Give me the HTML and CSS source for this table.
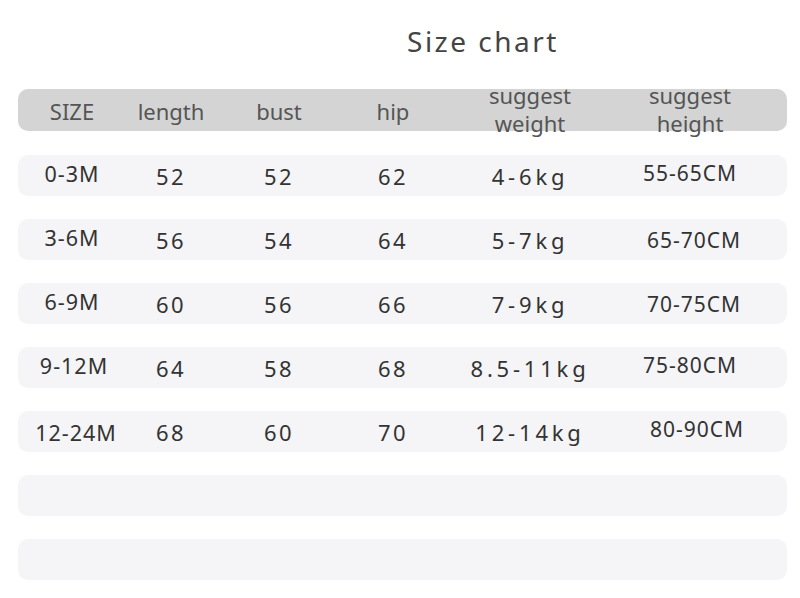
FILE: index.html
```html
<!DOCTYPE html>
<html>
<head>
<meta charset="utf-8">
<link rel="stylesheet" href="styles.css">
</head>
<body>
<div class="page">
  <h1 class="title">Size chart</h1>
  <div class="table">
    <div class="row head">
      <div class="cell">SIZE</div>
      <div class="cell">length</div>
      <div class="cell">bust</div>
      <div class="cell">hip</div>
      <div class="cell two">suggest<br>weight</div>
      <div class="cell two">suggest<br>height</div>
    </div>
    <div class="row">
      <div class="cell size">0-3M</div>
      <div class="cell num">52</div>
      <div class="cell num">52</div>
      <div class="cell num">62</div>
      <div class="cell num kg">4-6kg</div>
      <div class="cell cm">55-65CM</div>
    </div>
    <div class="row">
      <div class="cell size">3-6M</div>
      <div class="cell num">56</div>
      <div class="cell num">54</div>
      <div class="cell num">64</div>
      <div class="cell num kg">5-7kg</div>
      <div class="cell cm low shift">65-70CM</div>
    </div>
    <div class="row">
      <div class="cell size">6-9M</div>
      <div class="cell num">60</div>
      <div class="cell num">56</div>
      <div class="cell num">66</div>
      <div class="cell num kg">7-9kg</div>
      <div class="cell cm low shift">70-75CM</div>
    </div>
    <div class="row">
      <div class="cell size wide">9-12M</div>
      <div class="cell num">64</div>
      <div class="cell num">58</div>
      <div class="cell num">68</div>
      <div class="cell num kg">8.5-11kg</div>
      <div class="cell cm">75-80CM</div>
    </div>
    <div class="row">
      <div class="cell size wide low">12-24M</div>
      <div class="cell num">68</div>
      <div class="cell num">60</div>
      <div class="cell num">70</div>
      <div class="cell num kg">12-14kg</div>
      <div class="cell cm shift2">80-90CM</div>
    </div>
    <div class="row"></div>
    <div class="row"></div>
  </div>
</div>
</body>
</html>
```
FILE: styles.css
```css
html, body {
  margin: 0;
  padding: 0;
  background: #ffffff;
}
.page {
  width: 800px;
  height: 598px;
  overflow: hidden;
  font-family: "Noto Sans", "Open Sans", sans-serif;
  color: #333;
}
.title {
  margin: 0;
  padding: 22px 0 0 166px;
  height: 65px;
  box-sizing: border-box;
  text-align: center;
  font-size: 28px;
  font-weight: 400;
  letter-spacing: 2.5px;
  line-height: 38px;
  color: #444;
}
.table {
  margin-top: 24px;
  margin-left: 18px;
  width: 769px;
  display: flex;
  flex-direction: column;
  gap: 23px;
}
.row {
  height: 41px;
  border-radius: 10px;
  background: #f5f5f7;
  display: grid;
  grid-template-columns: 108px 90px 126px 102px 172px 148px;
  align-items: center;
}
.row.head {
  height: 42px;
  background: #d4d4d4;
  color: #555;
  font-size: 22px;
  margin-bottom: 1px;
}
.cell {
  text-align: center;
  white-space: nowrap;
}
.head .cell {
  line-height: 28px;
  margin-top: -4px;
}
.head .cell.two {
  margin-top: -8px;
}
.size {
  font-size: 21.5px;
  letter-spacing: 1px;
  margin-top: -5px;
}
.size.wide {
  padding-left: 4px;
}
.size.low {
  margin-top: 2px;
  padding-left: 8px;
}
.num {
  font-size: 22px;
  letter-spacing: 2.5px;
}
.num.kg {
  letter-spacing: 3.8px;
}
.cm {
  font-size: 21px;
  letter-spacing: 1px;
  margin-top: -5px;
}
.cm.low {
  margin-top: 1px;
}
.cm.shift {
  padding-left: 8px;
}
.cm.shift2 {
  padding-left: 14px;
}
```
